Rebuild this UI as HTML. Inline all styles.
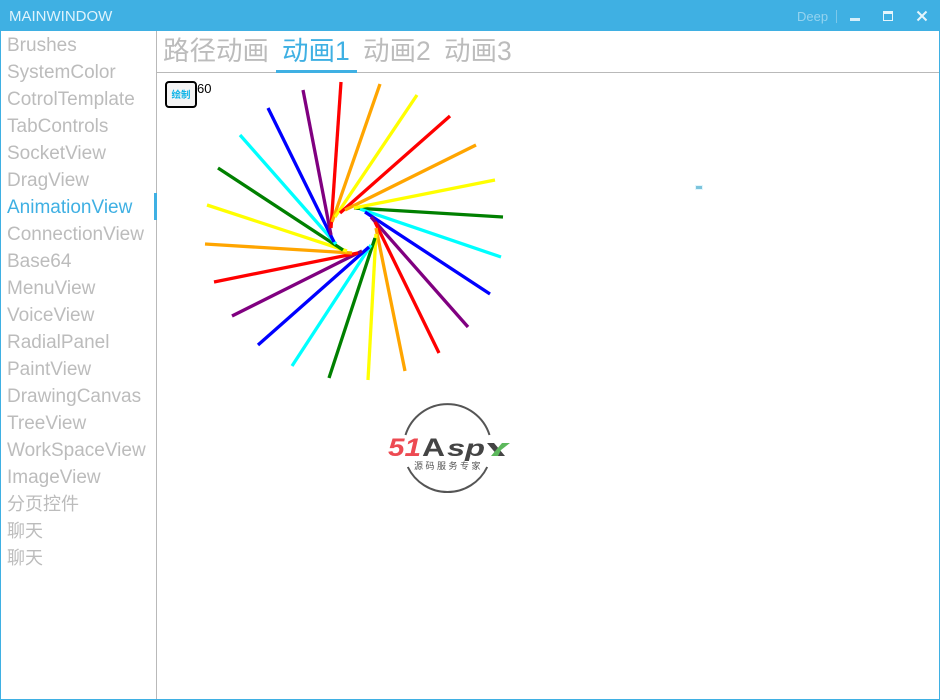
<!DOCTYPE html>
<html><head><meta charset="utf-8"><style>
html,body{margin:0;padding:0;background:#fff}
#w{position:relative;width:940px;height:700px;overflow:hidden;background:#fff;font-family:"Liberation Sans","Noto Sans CJK SC",sans-serif}
.a{position:absolute;white-space:nowrap}
.s{position:absolute;left:7px;font-size:19px;line-height:27px;height:27px;color:#bcbcbc;white-space:nowrap}
.t{position:absolute;top:32px;font-size:26.500px;line-height:38px;color:#bcbcbc;white-space:nowrap}
</style></head><body><div id="w">
<div class="a" style="left:0;top:0;width:940px;height:31px;background:#3fb0e3"></div>
<div class="a" style="left:0;top:31px;width:1px;height:669px;background:#3fb0e3"></div>
<div class="a" style="left:939px;top:31px;width:1px;height:669px;background:#3fb0e3"></div>
<div class="a" style="left:0;top:699px;width:940px;height:1px;background:#3fb0e3"></div>
<div class="a" style="left:9px;top:8px;font-size:15px;line-height:17px;color:#dff3fc">MAINWINDOW</div>
<div class="a" style="left:797px;top:9px;font-size:13px;line-height:15px;color:#95d3ef">Deep</div>
<div class="a" style="left:836px;top:10px;width:1px;height:13px;background:#7cc8ea"></div>
<div class="a" style="left:850px;top:18px;width:10px;height:3px;background:#d5eefa"></div>
<div class="a" style="left:883px;top:11px;width:8px;height:6px;border:1px solid #e5f5fc;border-top-width:3px"></div>
<svg class="a" style="left:916px;top:10px" width="12" height="12"><path d="M1.500 1.500L10.500 10.500M10.500 1.500L1.500 10.500" stroke="#e5f5fc" stroke-width="2" fill="none"/></svg>

<div class="a" style="left:156px;top:31px;width:1px;height:668px;background:#b9b9b9"></div>
<div class="a" style="left:154px;top:193px;width:3px;height:27px;background:#3fb0e3"></div>
<div class="s" style="top:32px">Brushes</div>
<div class="s" style="top:59px">SystemColor</div>
<div class="s" style="top:86px">CotrolTemplate</div>
<div class="s" style="top:113px">TabControls</div>
<div class="s" style="top:140px">SocketView</div>
<div class="s" style="top:167px">DragView</div>
<div class="s" style="top:194px;color:#3fb0e3">AnimationView</div>
<div class="s" style="top:221px">ConnectionView</div>
<div class="s" style="top:248px">Base64</div>
<div class="s" style="top:275px">MenuView</div>
<div class="s" style="top:302px">VoiceView</div>
<div class="s" style="top:329px">RadialPanel</div>
<div class="s" style="top:356px">PaintView</div>
<div class="s" style="top:383px">DrawingCanvas</div>
<div class="s" style="top:410px">TreeView</div>
<div class="s" style="top:437px">WorkSpaceView</div>
<div class="s" style="top:464px">ImageView</div>
<div class="s" style="top:491px;font-size:18px">分页控件</div>
<div class="s" style="top:518px;font-size:18px">聊天</div>
<div class="s" style="top:545px;font-size:18px">聊天</div>

<div class="t" style="left:163px">路径动画</div>
<div class="t" style="left:282px;color:#3fb0e3">动画1</div>
<div class="t" style="left:363px">动画2</div>
<div class="t" style="left:444px">动画3</div>
<div class="a" style="left:157px;top:72px;width:782px;height:1px;background:#b9b9b9"></div>
<div class="a" style="left:276px;top:70px;width:81px;height:3px;background:#3fb0e3"></div>

<div class="a" style="left:165px;top:81px;width:28px;height:23px;border:2px solid #000;border-radius:4px;background:#f4f4f4"></div>
<div class="a" style="left:165px;top:81px;width:32px;height:27px;font-size:9.500px;line-height:29px;text-align:center;color:#12b5e8;font-weight:bold">绘制</div>
<div class="a" style="left:197px;top:81px;font-size:13px;line-height:15px;color:#000">60</div>

<svg class="a" style="left:0;top:0" width="940" height="700" fill="none" stroke-width="3.300">
<path d="M354 208L503 217" stroke="#008000"/>
<path d="M360 209L501 257" stroke="#00ffff"/>
<path d="M365 212L490 294" stroke="#0000ff"/>
<path d="M371 217L468 327" stroke="#800080"/>
<path d="M375 222L439 353" stroke="#ff0000"/>
<path d="M376 228L405 371" stroke="#ffa500"/>
<path d="M376 234L368 380" stroke="#ffff00"/>
<path d="M375 238L329 378" stroke="#008000"/>
<path d="M371 245L292 366" stroke="#00ffff"/>
<path d="M369 247L258 345" stroke="#0000ff"/>
<path d="M362 251L232 316" stroke="#800080"/>
<path d="M358 253L214 282" stroke="#ff0000"/>
<path d="M352 253L205 244" stroke="#ffa500"/>
<path d="M347 251L207 205" stroke="#ffff00"/>
<path d="M343 250L218 168" stroke="#008000"/>
<path d="M336 244L240 135" stroke="#00ffff"/>
<path d="M334 242L268 108" stroke="#0000ff"/>
<path d="M331 235L303 90" stroke="#800080"/>
<path d="M331 228L341 82" stroke="#ff0000"/>
<path d="M332 222L380 84" stroke="#ffa500"/>
<path d="M335 217L417 95" stroke="#ffff00"/>
<path d="M340 213L450 116" stroke="#ff0000"/>
<path d="M345 210L476 145" stroke="#ffa500"/>
<path d="M354 208L495 180" stroke="#ffff00"/>
</svg>

<div class="a" style="left:696px;top:186px;width:6px;height:3px;background:#7cc4dc;outline:1px solid #e2f6fd"></div>

<svg class="a" style="left:380px;top:395px" width="140" height="105" fill="none">
<path d="M25.500 40A44 44 0 0 1 109.500 40" stroke="#555" stroke-width="2"/>
<path d="M107.200 72A44 44 0 0 1 27.800 72" stroke="#555" stroke-width="2"/>
<text x="8" y="61" font-family="Liberation Sans" font-size="25" font-weight="bold" font-style="italic" fill="#ed4a52" textLength="33" lengthAdjust="spacingAndGlyphs">51</text>
<text x="42" y="61" font-family="Liberation Sans" font-size="25" font-weight="bold" fill="#444" textLength="23" lengthAdjust="spacingAndGlyphs">A</text>
<text x="67" y="61" font-family="Liberation Sans" font-size="23" font-weight="bold" font-style="italic" fill="#444" textLength="38" lengthAdjust="spacingAndGlyphs">sp</text>
<path d="M107 48h7l11 13h-7z" fill="#444"/>
<path d="M122 48h8l-9 7-3 6h-7z" fill="#5cb85c"/>
<text x="34" y="74" font-family="Liberation Sans,Noto Sans CJK SC,sans-serif" font-size="9" fill="#555" letter-spacing="2.500">源码服务专家</text>
</svg>
</div></body></html>
